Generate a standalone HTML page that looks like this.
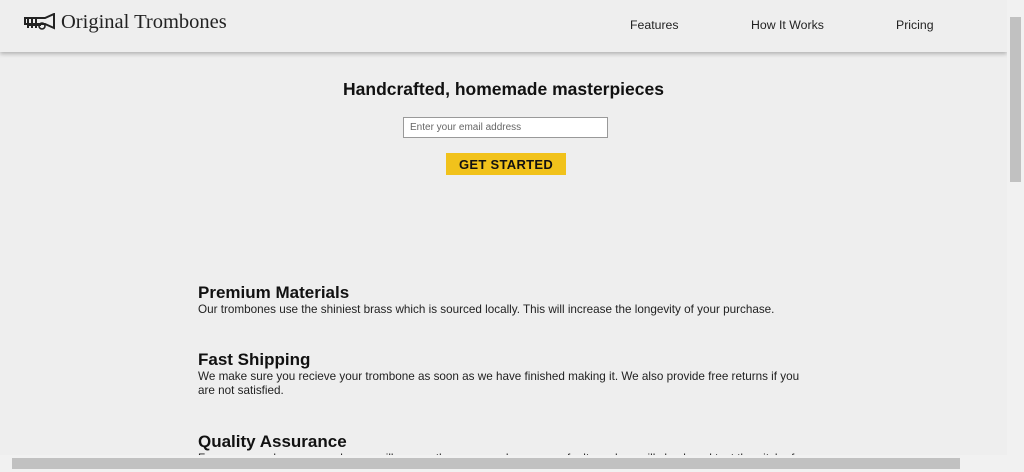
<!DOCTYPE html>
<html><head><style>
html,body{margin:0;padding:0;width:1024px;height:472px;overflow:hidden;background:#eeeeee;font-family:"Liberation Sans",sans-serif;color:#111}
.wrap{position:absolute;left:0;top:0;width:1024px;height:472px;overflow:hidden}
.hdr{position:absolute;left:0;top:0;width:1007px;height:52px;background:#eeeeee;box-shadow:0 2px 4px rgba(0,0,0,.25);z-index:2}
.logo{position:absolute;left:24px;top:11px;font-family:"Liberation Serif",serif;font-size:20.5px;color:#222}
.logo svg{vertical-align:-3px;margin-right:5px}
.nav{position:absolute;top:18px;font-size:12.3px;color:#222}
h1{position:absolute;left:0;width:1007px;top:79px;margin:0;text-align:center;font-size:17.5px;font-weight:bold;color:#111}
.inp{position:absolute;left:403px;top:117px;width:205px;height:21px;border:1px solid #999;background:#fff;box-sizing:border-box;font-size:10px;color:#666;padding:4px 6px;font-family:"Liberation Sans",sans-serif}
.btn{position:absolute;left:446px;top:153px;width:120px;height:22px;background:#f1c21b;font-weight:bold;font-size:13px;text-align:center;line-height:23px;color:#111;letter-spacing:.3px}
.sec{position:absolute;left:198px;width:606px}
.sec h2{margin:0;font-size:17px;font-weight:bold;color:#111;line-height:20px}
.sec p{margin:0;font-size:11.7px;line-height:14px;color:#222}
.vs{position:absolute;right:0;top:0;width:17px;height:472px;background:#f1f1f1;z-index:4}
.vth{position:absolute;right:3px;top:17px;width:11px;height:165px;background:#c1c1c1}
.hs{position:absolute;left:0;top:455px;width:1024px;height:17px;background:#f1f1f1;z-index:3}
.hth{position:absolute;left:12px;top:3px;width:948px;height:11px;background:#c1c1c1}
</style></head><body><div class="wrap">
<div class="hdr">
<div class="logo"><svg width="32" height="18" viewBox="0 0 32 18"><path d="M1 5h20l9-4v14l-9-4H1z" fill="none" stroke="#222" stroke-width="2"/><path d="M4 4v11M8 4v11M12 4v11M3 12h14" stroke="#222" stroke-width="2" fill="none"/><circle cx="18" cy="13" r="3" fill="none" stroke="#222" stroke-width="1.6"/></svg>Original Trombones</div>
<div class="nav" style="left:630px">Features</div>
<div class="nav" style="left:751px">How It Works</div>
<div class="nav" style="left:896px">Pricing</div>
</div>
<h1>Handcrafted, homemade masterpieces</h1>
<div class="inp">Enter your email address</div>
<div class="btn">GET STARTED</div>
<div class="sec" style="top:283px"><h2>Premium Materials</h2><p>Our trombones use the shiniest brass which is sourced locally. This will increase the longevity of your purchase.</p></div>
<div class="sec" style="top:350px"><h2>Fast Shipping</h2><p>We make sure you recieve your trombone as soon as we have finished making it. We also provide free returns if you are not satisfied.</p></div>
<div class="sec" style="top:432px"><h2>Quality Assurance</h2><p>For every purchase you make, we will ensure there are no damages or faults and we will check and test the pitch of your trombone.</p></div>
<div class="vs"><div class="vth"></div></div>
<div class="hs"><div class="hth"></div></div>
</div></body></html>
